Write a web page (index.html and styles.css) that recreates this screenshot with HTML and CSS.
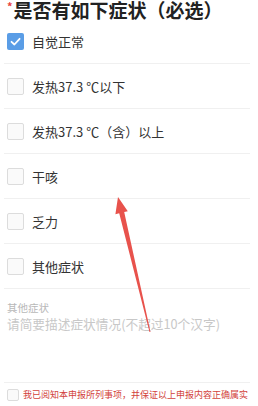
FILE: index.html
```html
<!DOCTYPE html>
<html lang="zh-CN">
<head>
    <meta charset="UTF-8">
    <meta name="viewport" content="width=device-width, initial-scale=1.0">
    <title>症状申报</title>
    <link rel="stylesheet" href="styles.css">
</head>
<body>
    <div class="page">
        <h2 class="title"><span class="star">*</span>是否有如下症状（必选）</h2>
        <div class="list">
            <div class="row"><span class="box checked"><svg viewBox="0 0 17 17" width="17" height="17"><path d="M4.5 8.8 L7.4 11.5 L12.6 5.8" fill="none" stroke="#fff" stroke-width="1.8" stroke-linecap="round" stroke-linejoin="round"/></svg></span>自觉正常</div>
            <div class="row"><span class="box"></span>发热37.3 ℃以下</div>
            <div class="row"><span class="box"></span>发热37.3 ℃（含）以上</div>
            <div class="row"><span class="box"></span>干咳</div>
            <div class="row"><span class="box"></span>乏力</div>
            <div class="row"><span class="box"></span>其他症状</div>
        </div>
        <div class="other">
            <div class="other-label">其他症状</div>
            <div class="other-input">请简要描述症状情况(不超过10个汉字)</div>
        </div>
        <div class="agree"><span class="box small"></span>我已阅知本申报所列事项，并保证以上申报内容正确属实</div>

        <!-- red arrow drawn over the form -->
        <svg class="arrow" width="258" height="406" viewBox="0 0 258 406">
            <polygon points="118,197 127.8,211.2 124.2,212 150.5,332 149.5,332 119.2,213.2 115.4,214.2" fill="#e8524c"/>
        </svg>
    </div>
</body>
</html>
```

FILE: styles.css
```css
body {
    margin: 0;
    padding: 0;
    background: #fff;
    font-family: "Noto Sans CJK SC", "Noto Sans", sans-serif;
    color: #333;
}
.page {
    position: relative;
    width: 258px;
    height: 406px;
    overflow: hidden;
}
.title {
    margin: 0;
    padding-left: 7px;
    height: 20px;
    line-height: 20px;
    font-size: 19px;
    font-weight: bold;
    color: #222;
    white-space: nowrap;
}
.star {
    color: #e8433e;
    font-size: 11px;
    vertical-align: top;
    line-height: 12px;
    margin-right: 1px;
}
.row {
    display: flex;
    align-items: center;
    height: 44px;
    margin: 0 8px 0 4px;
    padding-left: 3px;
    border-bottom: 1px solid #f0f0f0;
    font-size: 13px;
    color: #333;
}
.row:first-child {
    height: 43px;
}
.box {
    display: flex;
    align-items: center;
    justify-content: center;
    width: 15px;
    height: 15px;
    border: 1px solid #dcdcdc;
    border-radius: 2px;
    background: #fafafa;
    margin-right: 8px;
    flex-shrink: 0;
}
.box.checked {
    width: 17px;
    height: 17px;
    border: none;
    background: #5a9de6;
}
.other {
    height: 94px;
    margin: 0 8px 0 4px;
    padding: 12px 0 0 3px;
    box-sizing: border-box;
    border-bottom: 1px solid #f0f0f0;
}
.other-label {
    font-size: 10.5px;
    line-height: 14px;
    color: #b8b8b8;
}
.other-input {
    font-size: 12.7px;
    line-height: 18px;
    color: #c8c8c8;
}
.agree {
    display: flex;
    align-items: center;
    height: 23px;
    padding-left: 7px;
    font-size: 9px;
    color: #d2423c;
    white-space: nowrap;
}
.box.small {
    width: 10px;
    height: 10px;
    margin-right: 4px;
}
.arrow {
    position: absolute;
    left: 0;
    top: 0;
}
```
